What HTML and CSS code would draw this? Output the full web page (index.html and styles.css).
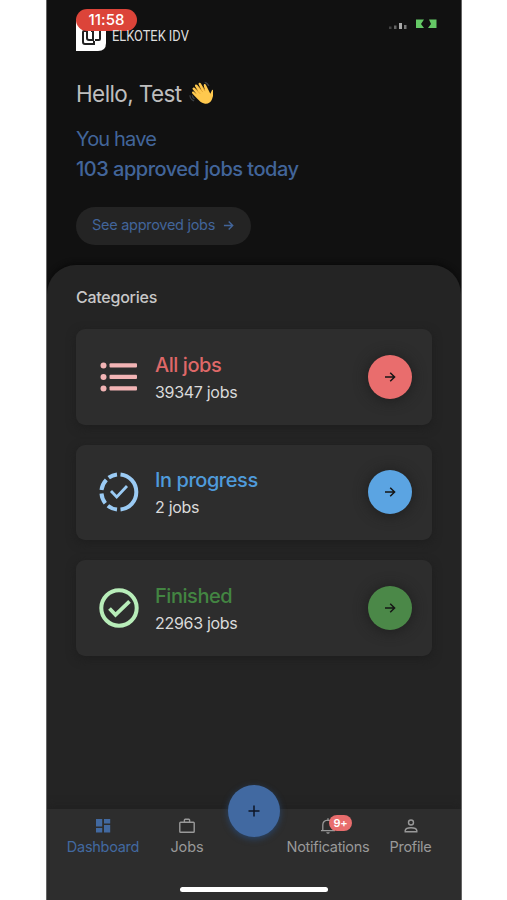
FILE: index.html
```
<!DOCTYPE html>
<html lang="en">
<head>
<meta charset="utf-8">
<title>Elkotek IDV</title>
<link rel="stylesheet" href="styles.css">
</head>
<body>
<svg class="defs" width="0" height="0"><symbol id="arrow" viewBox="0 0 12 12"><path d="M1 6h9.500M6.200 1.700 10.600 6 6.200 10.300" fill="none" stroke="currentColor" stroke-width="1.500"/></symbol></svg>
<div class="phone">
  <header class="top">
    <span class="time">11:58</span>
    <div class="status">
      <svg width="20" height="8" viewBox="0 0 20 8"><path fill="#444" d="M1 4.500h2.500V7H1z"/><path fill="#666" d="M6 3.500h2.500V7H6z"/><path fill="#aaa" d="M11 1h3v6h-3z"/><path fill="#777" d="M16 3h2.500v4H16z"/></svg>
      <svg width="22" height="10" viewBox="0 0 22 10"><path fill="#65c966" d="M1 .5h8L6 5l3 4H1zM14 .5h7.500V9H13l3-4z"/></svg>
    </div>
    <div class="brand">
      <svg width="30" height="32" viewBox="0 0 30 32"><path fill="#fff" d="M0 0h30v24q0 8-8 8H0z"/><path d="M10 12H8q-1 0-1 1v10q0 2 2 2h9v-3M12 9h-1v10q0 2 2 2h4v-9h-2M19 21h4q1 0 1-1V10h-7" fill="none" stroke="#222" stroke-width="2"/></svg>
      <span class="brand-name">ELKOTEK IDV</span>
    </div>
    <h1><span>Hello, Test</span>
      <svg width="24" height="24" viewBox="0 0 26 26"><path fill="#ffc94e" d="M4.200 7.500c.9-.9 2-.3 2.700.5l3 3L6.700 6c-1-1.800 1-3.200 2.300-1.600l4.500 5.700-3-6.200c-.8-1.800 1.400-2.800 2.400-1.200l4.400 7.600-1.300-5.100c-.4-2 1.600-2.600 2.400-.8l4.700 9.500 1.600-3.500c.6-1.500 2.500-1 2.200.9-.4 3-.9 5.500-2 8.500-1.400 3.700-4.700 5.600-8.400 4.700-3.200-.8-5.500-3.200-7.200-5l-5.500-5.800c-1.500-1.500.4-3 1.800-1.700l2.700 2.400-4.100-5.100c-.7-.9-.5-1.500 0-1.800z"/><path d="m7 8.500 5 5.300M10 6l5 6M14.500 6l3 5" fill="none" stroke="#d99527" stroke-width=".7"/><path d="M1 15.500q.2 4.500 4.500 6M3.500 15.500q.3 2.500 2.500 4M17 1.500q3 .5 4.500 4" fill="none" stroke="#3c4146" stroke-width="1.300"/></svg>
    </h1>
    <p class="have">You have</p>
    <p class="approved">103 approved jobs today</p>
    <a class="pill"><span>See approved jobs</span><svg width="11" height="11"><use href="#arrow"/></svg></a>
  </header>
  <main class="sheet">
    <h2>Categories</h2>
    <section class="card red">
      <svg class="icon" width="40" height="40" viewBox="0 0 40 40"><g fill="#f2b4b5"><circle cx="4.500" cy="8.500" r="3"/><circle cx="4.500" cy="20" r="3"/><circle cx="4.500" cy="31.500" r="3"/><rect x="10.500" y="6.300" width="27.500" height="4.300" rx="1"/><rect x="10.500" y="17.800" width="27.500" height="4.300" rx="1"/><rect x="10.500" y="29.300" width="27.500" height="4.300" rx="1"/></g></svg>
      <div class="info"><h3>All jobs</h3><p>39347 jobs</p></div>
      <span class="go"><svg width="12" height="12"><use href="#arrow"/></svg></span>
    </section>
    <section class="card blue">
      <svg class="icon" width="40" height="40" viewBox="0 0 40 40" fill="none" stroke="#9bcbf4"><g stroke-width="4"><path d="M21.500 2.400a17.700 17.700 0 0 1 0 35.200"/><path d="M18 2.400A17.700 17.700 0 0 0 9.700 5.700M7.300 7.900A17.700 17.700 0 0 0 2.500 18M2.500 21.500A17.700 17.700 0 0 0 6.300 31.200M8.900 33.700A17.700 17.700 0 0 0 18 37.600"/></g><path d="m12 19 5.700 6L28 14" stroke-width="2.800"/></svg>
      <div class="info"><h3>In progress</h3><p>2 jobs</p></div>
      <span class="go"><svg width="12" height="12"><use href="#arrow"/></svg></span>
    </section>
    <section class="card green">
      <svg class="icon" width="40" height="40" viewBox="0 0 40 40" fill="none" stroke="#b8edb9"><circle cx="20" cy="20" r="17.700" stroke-width="4"/><path d="m10.500 20.500 6 6.300L30.500 13.300" stroke-width="3.800"/></svg>
      <div class="info"><h3>Finished</h3><p>22963 jobs</p></div>
      <span class="go"><svg width="12" height="12"><use href="#arrow"/></svg></span>
    </section>
  </main>
  <nav class="tabs">
    <a class="tab active"><svg width="16" height="16" viewBox="0 0 16 16"><path fill="currentColor" d="M1 1h6.200v7.500H1zM9 1h6.200v4.500H9zM1 10h6.200v4.500H1zM9 7h6.200v7.500H9z"/></svg><span>Dashboard</span></a>
    <a class="tab jobs"><svg width="16" height="16" viewBox="0 0 16 16"><path fill="none" stroke="currentColor" stroke-width="1.400" d="M1.600 4.200h12.800q.8 0 .8.800v8.500q0 .8-.8.800H1.600q-.8 0-.8-.8V5q0-.8.8-.8zM5.400 4V2.100q0-.8.8-.8h3.600q.8 0 .8.800V4"/></svg><span>Jobs</span></a>
    <button class="add" aria-label="+"><svg width="12" height="12" viewBox="0 0 12 12"><path d="M6 .5v11M.5 6h11" stroke="#0d1524" stroke-width="1.500"/></svg></button>
    <a class="tab notes"><svg width="16" height="16" viewBox="0 0 16 16"><path d="M2.800 12.500V7q0-4.700 5.200-4.900Q13.200 2.300 13.200 7v5.500M1 12.700h14M8 .3v2" fill="none" stroke="currentColor" stroke-width="1.300"/><path d="M6.200 14.300h3.600q-.3 1.500-1.800 1.500t-1.800-1.500z" fill="currentColor"/></svg><b class="badge">9+</b><span>Notifications</span></a>
    <a class="tab profile"><svg width="16" height="16" viewBox="0 0 16 16"><g fill="none" stroke="currentColor" stroke-width="1.400"><circle cx="8" cy="4.500" r="2.500"/><path d="M2.200 13.800v-1.500Q2.800 9.700 8 9.700t5.800 2.600v1.500z"/></g></svg><span>Profile</span></a>
    <i class="home"></i>
  </nav>
</div>
</body>
</html>
```
FILE: styles.css
```
* { box-sizing: border-box; margin: 0; padding: 0; }
body { background: #fff; font-family: Inter, "Liberation Sans", sans-serif; }
.defs { position: absolute; }
svg { display: block; flex: none; }
.phone { width: 416px; height: 900px; margin-left: 46px; background: #111; border: solid #656565; border-width: 0 1px; overflow: hidden; display: flex; flex-direction: column; }
.top { height: 265px; padding: 19px 29px 0; position: relative; flex: none; }
.time { position: absolute; left: 29px; top: 9px; width: 61px; height: 22px; border-radius: 11px; background: #dc4439; color: #fff; font-size: 15px; line-height: 22px; font-weight: 500; text-align: center; letter-spacing: .1px; }
.status { position: absolute; right: 24px; top: 19px; display: flex; gap: 5px; }
.status svg:first-child { margin: 3px 2px 0 0; }
.brand { display: flex; align-items: center; gap: 6px; height: 32px; }
.brand-name { color: #ddd; font: 15px/32px Roboto, sans-serif; white-space: nowrap; transform: scaleX(.855); transform-origin: left; padding-top: 2px; }
h1 { display: flex; align-items: center; gap: 7px; height: 30px; margin-top: 27px; color: #bebebe; font-size: 22.500px; font-weight: 400; letter-spacing: -.6px; white-space: nowrap; }
.have, .approved { color: #42659a; font-size: 20px; line-height: 30px; white-space: nowrap; letter-spacing: -.5px; }
.have { margin-top: 15.500px; letter-spacing: -.85px; }
.approved { font-weight: 450; }
.pill { display: flex; align-items: center; gap: 8px; width: 175px; height: 38px; margin-top: 23px; padding-left: 16px; border-radius: 19px; background: #242424; color: #42659a; font-size: 14.500px; letter-spacing: -.28px; white-space: nowrap; }
.pill span { position: relative; top: -1px; }
.sheet { flex: 1; background: #242424; border-radius: 29px 29px 0 0; padding: 21px 29px 0; box-shadow: 0 -2px 5px #0b0b0b; }
h2 { color: #c8c8c8; font-size: 16px; line-height: 23px; font-weight: 500; letter-spacing: -.25px; margin-bottom: 20px; }
.card { display: flex; align-items: center; height: 95.500px; margin-bottom: 20px; padding: 0 20px 0 23px; border-radius: 9px; background: #2d2d2d; box-shadow: 0 3px 10px #1e1e1e; }
.info { margin-left: 16px; padding-top: 4px; flex: 1; white-space: nowrap; }
h3 { font-size: 20px; line-height: 27px; font-weight: 500; letter-spacing: -.45px; }
.info p { color: #dadada; font-size: 16px; line-height: 27px; letter-spacing: -.3px; }
.go { width: 44px; height: 44px; border-radius: 50%; display: flex; align-items: center; justify-content: center; color: #161616; box-shadow: 0 1px 14px #1d1d1d; }
.red h3 { color: #df6868; } .red .go { background: #e96d6d; }
.blue h3 { color: #4f9bdb; } .blue .go { background: #5ba4e2; }
.green h3 { color: #438542; } .green .go { background: #4b8848; }
.tabs { height: 91px; flex: none; position: relative; background: #2d2d2d; display: flex; padding: 9px 19px 0 17px; box-shadow: 0 -2px 8px #202020; color: #999; }
.tab { position: relative; display: flex; flex-direction: column; align-items: center; gap: 3px; height: 40px; font-size: 14.500px; line-height: 20px; white-space: nowrap; letter-spacing: -.28px; }
.active { width: 78px; color: #4269a0; }
.jobs { width: 44px; margin-left: 23px; letter-spacing: -.1px; }
.add { width: 52px; height: 52px; margin: -33px 0 0 19px; border: 0; border-radius: 50%; background: #4169a1; box-shadow: 0 2px 6px #29456a; display: flex; align-items: center; justify-content: center; }
.notes { width: 90px; margin-left: 3px; }
.profile { width: 50px; margin-left: 12.500px; }
.badge { position: absolute; top: -3px; left: 46px; width: 23px; height: 16px; border-radius: 8px; background: #e86d6d; color: #fff; font-size: 11px; line-height: 16px; text-align: center; font-weight: 600; }
.home { position: absolute; left: 133px; bottom: 8px; width: 148px; height: 5px; border-radius: 3px; background: #fff; }
```
